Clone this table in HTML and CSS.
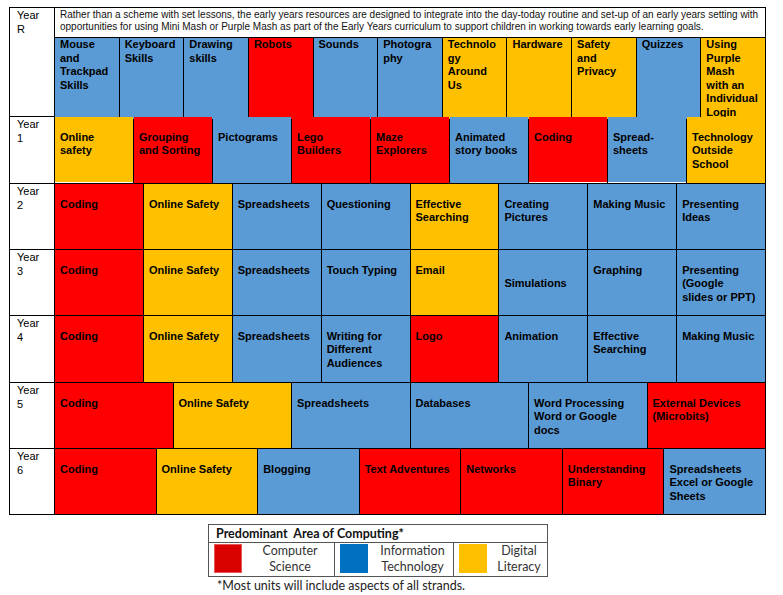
FILE: index.html
```html
<!DOCTYPE html>
<html lang="en">
<head>
<meta charset="utf-8">
<title>Computing Curriculum Overview</title>
<link rel="stylesheet" href="styles.css">
</head>
<body>
<div class="page">
  <div class="chart">
    <div class="row row-r">
      <div class="label">Year<br>R</div>
      <div class="body">
        <div class="intro">Rather than a scheme with set lessons, the early years resources are designed to integrate into the day-today routine and set-up of an early years setting with opportunities for using Mini Mash or Purple Mash as part of the Early Years curriculum to support children in working towards early learning goals.</div>
        <div class="units cols-11 first">
          <div class="unit it">Mouse and Trackpad Skills</div>
          <div class="unit it">Keyboard Skills</div>
          <div class="unit it">Drawing skills</div>
          <div class="unit cs">Robots</div>
          <div class="unit it">Sounds</div>
          <div class="unit it">Photography</div>
          <div class="unit dl">Technology Around Us</div>
          <div class="unit dl">Hardware</div>
          <div class="unit dl">Safety and Privacy</div>
          <div class="unit it">Quizzes</div>
          <div class="unit dl">Using Purple Mash with an Individual Login</div>
        </div>
      </div>
    </div>

    <div class="row h66">
      <div class="label">Year<br>1</div>
      <div class="units cols-9">
        <div class="unit dl edge">Online safety</div>
        <div class="unit cs">Grouping and Sorting</div>
        <div class="unit it">Pictograms</div>
        <div class="unit cs">Lego Builders</div>
        <div class="unit cs">Maze Explorers</div>
        <div class="unit it">Animated story books</div>
        <div class="unit cs edge">Coding</div>
        <div class="unit it edge">Spread-sheets</div>
        <div class="unit dl">Technology Outside School</div>
      </div>
    </div>

    <div class="row h65">
      <div class="label">Year<br>2</div>
      <div class="units cols-8">
        <div class="unit cs">Coding</div>
        <div class="unit dl">Online Safety</div>
        <div class="unit it">Spreadsheets</div>
        <div class="unit it">Questioning</div>
        <div class="unit dl">Effective Searching</div>
        <div class="unit it">Creating Pictures</div>
        <div class="unit it">Making Music</div>
        <div class="unit it">Presenting Ideas</div>
      </div>
    </div>

    <div class="row h65">
      <div class="label">Year<br>3</div>
      <div class="units cols-8">
        <div class="unit cs">Coding</div>
        <div class="unit dl">Online Safety</div>
        <div class="unit it">Spreadsheets</div>
        <div class="unit it">Touch Typing</div>
        <div class="unit dl">Email</div>
        <div class="unit it low">Simulations</div>
        <div class="unit it">Graphing</div>
        <div class="unit it">Presenting (Google slides or PPT)</div>
      </div>
    </div>

    <div class="row h66">
      <div class="label">Year<br>4</div>
      <div class="units cols-8">
        <div class="unit cs">Coding</div>
        <div class="unit dl">Online Safety</div>
        <div class="unit it">Spreadsheets</div>
        <div class="unit it">Writing for Different Audiences</div>
        <div class="unit cs">Logo</div>
        <div class="unit it">Animation</div>
        <div class="unit it">Effective Searching</div>
        <div class="unit it">Making Music</div>
      </div>
    </div>

    <div class="row h65">
      <div class="label">Year<br>5</div>
      <div class="units cols-6">
        <div class="unit cs">Coding</div>
        <div class="unit dl">Online Safety</div>
        <div class="unit it">Spreadsheets</div>
        <div class="unit it">Databases</div>
        <div class="unit it">Word Processing Word or Google docs</div>
        <div class="unit cs">External Devices (Microbits)</div>
      </div>
    </div>

    <div class="row h65">
      <div class="label">Year<br>6</div>
      <div class="units cols-7">
        <div class="unit cs">Coding</div>
        <div class="unit dl">Online Safety</div>
        <div class="unit it">Blogging</div>
        <div class="unit cs">Text Adventures</div>
        <div class="unit cs">Networks</div>
        <div class="unit cs">Understanding Binary</div>
        <div class="unit it">Spreadsheets Excel or Google Sheets</div>
      </div>
    </div>
  </div>

  <div class="legend">
    <div class="legend-title">Predominant&nbsp; Area of Computing*</div>
    <div class="legend-keys">
      <div class="key key-cs">
        <span class="swatch sw-cs"></span>
        <span class="key-text">Computer<br>Science</span>
      </div>
      <div class="key key-it">
        <span class="swatch sw-it"></span>
        <span class="key-text">Information<br>Technology</span>
      </div>
      <div class="key key-dl">
        <span class="swatch sw-dl"></span>
        <span class="key-text">Digital<br>Literacy</span>
      </div>
    </div>
  </div>
  <div class="footnote">*Most units will include aspects of all strands.</div>
</div>
</body>
</html>
```

FILE: styles.css
```css
html, body {
  margin: 0;
  padding: 0;
  background: #ffffff;
}

.page {
  padding: 7px 0 0 9px;
  font-family: "Liberation Sans", Arial, sans-serif;
  color: #000;
}

.chart {
  box-sizing: border-box;
  width: 757px;
  border: 1px solid #000;
  background: #000;
  display: flex;
  flex-direction: column;
  gap: 1px;
}

.row {
  display: flex;
  gap: 1px;
}

.row-r { height: 108px; }
.h65 { height: 65px; }
.h66 { height: 66px; }

.label {
  width: 44px;
  flex: none;
  background: #fff;
  box-sizing: border-box;
  padding: 1px 0 0 7px;
  font-size: 11px;
  line-height: 13.5px;
}

.body {
  flex: 1;
  display: flex;
  flex-direction: column;
  gap: 1px;
}

.intro {
  height: 29px;
  flex: none;
  background: #fff;
  box-sizing: border-box;
  padding: 1px 4px 0 5px;
  font-size: 10px;
  line-height: 11.5px;
  color: #111;
}

.units {
  flex: 1;
  display: grid;
  gap: 1px;
}

.cols-11 { grid-template-columns: repeat(11, 1fr); }
.cols-9 { grid-template-columns: repeat(9, 1fr); }
.cols-8 { grid-template-columns: repeat(8, 1fr); }
.cols-7 { grid-template-columns: repeat(7, 1fr); }
.cols-6 { grid-template-columns: repeat(6, 1fr); }

.unit {
  box-sizing: border-box;
  min-width: 0;
  overflow: hidden;
  overflow-wrap: anywhere;
  padding: 13.5px 6px 0 5px;
  font-size: 11px;
  font-weight: bold;
  line-height: 13.5px;
  color: #000;
}

.first .unit { padding-top: 0; }
.cols-8 .unit { padding-right: 8px; }
.unit.low { padding-top: 27px; }
.unit.edge { box-shadow: inset 0 -1px 0 #fff; }

.cs { background: #ff0000; }
.it { background: #5b9bd5; }
.dl { background: #ffc000; }

/* Legend */
.legend {
  box-sizing: border-box;
  width: 340px;
  margin: 9px 0 0 199px;
  border: 1px solid #555;
  background: #555;
  display: flex;
  flex-direction: column;
  gap: 1px;
  font-family: Lato, "Open Sans", sans-serif;
}

.legend-title {
  height: 17px;
  background: #fff;
  box-sizing: border-box;
  padding: 0 0 0 7px;
  font-size: 12.5px;
  font-weight: bold;
  line-height: 17px;
  color: #111;
}

.legend-keys {
  height: 33px;
  display: grid;
  grid-template-columns: 125px 118px 1fr;
  gap: 1px;
}

.key {
  background: #fff;
  display: flex;
  align-items: flex-start;
}

.swatch {
  flex: none;
  width: 28px;
  height: 29px;
  margin: 1px 0 0 5px;
}

.sw-cs { background: #d90000; box-shadow: inset 0 0 0 1px #e8585a; }
.sw-it { background: #0070c0; }
.sw-dl { background: #ffc000; }

.key-text {
  flex: 1;
  text-align: center;
  padding: 0 0 0 4px;
  font-size: 12.5px;
  line-height: 16.3px;
  color: #333;
}

.footnote {
  margin: 1px 0 0 208px;
  font-family: Lato, "Open Sans", sans-serif;
  font-size: 12.5px;
  line-height: 15px;
  color: #222;
}
```
